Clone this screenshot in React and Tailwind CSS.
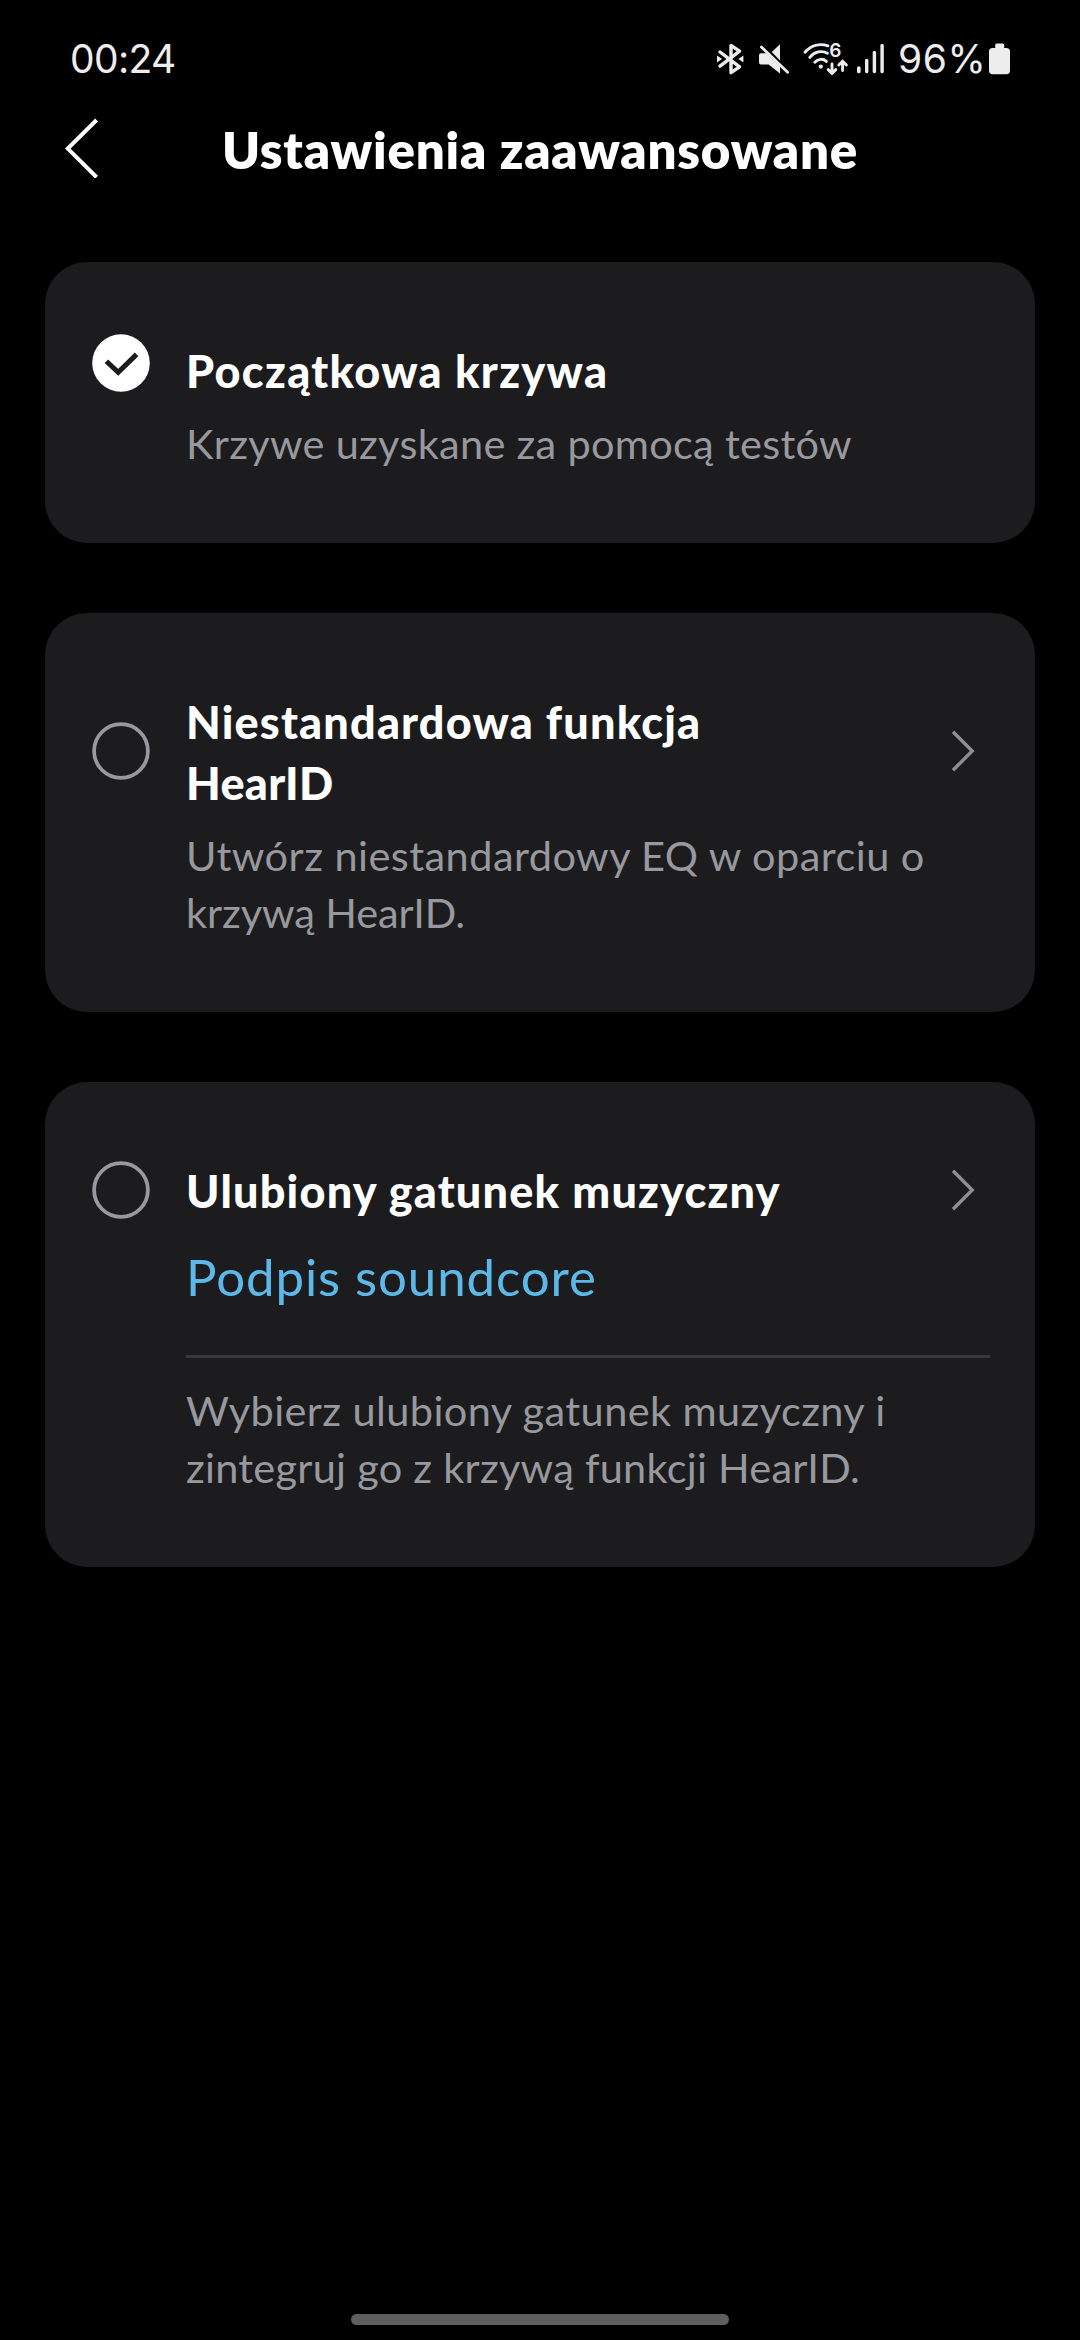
import React, { useState } from 'react';
import clsx from 'clsx';

const StatusBar = () => (
    <div className="flex h-[118px] shrink-0 items-center justify-between pl-[70px] pr-[69px] font-[Inter,sans-serif] text-[39px] leading-[40px] text-[#ededed]">
        <span className="tracking-[-0.65px]">00:24</span>

        <div className="flex items-center">
            {/* Bluetooth */}
            <svg width="28" height="34" viewBox="0 0 28 34" fill="none" stroke="currentColor" strokeWidth="3.4" strokeLinejoin="round" strokeLinecap="round">
                <path d="M4 10 23.6 24.9 15 30.6V3.4L23.6 9.1 4 24.2" />
                <path d="M1 13.4 6 17 1 20.6ZM27.4 13.4 22.4 17l5 3.6Z" fill="currentColor" stroke="none" />
            </svg>
            {/* Muted speaker */}
            <svg className="ml-[14px]" width="32" height="34" viewBox="0 0 32 34" fill="currentColor">
                <path d="M22 2.2V18.6L13.8 9.9ZM3 11.2H8.4L22 24.2V31.6L10.6 22.6H3Q1 22.6 1 20.6V13.2Q1 11.2 3 11.2Z" />
                <path d="M3.4 5 29.6 30.2" fill="none" stroke="currentColor" strokeWidth="2.8" strokeLinecap="round" />
            </svg>
            {/* Wi-Fi 6 */}
            <svg className="ml-[12px] overflow-visible" width="46" height="34" viewBox="0 0 46 34" fill="none" stroke="currentColor" strokeWidth="2.9" strokeLinecap="round">
                <path d="M3 10.2C9.2 3.2 18 1.2 26 3.8" />
                <path d="M7.8 15.4C12.6 9.4 19.6 8.2 25.4 11.2" />
                <path d="M12.8 20.2C16 16.6 21.2 16.4 24.4 19.4" />
                <circle cx="18.8" cy="24.6" r="2.1" fill="currentColor" stroke="none" />
                <path d="M30 22V31.2M26.2 27.6 30 31.4 33.8 27.6" />
                <path d="M40.6 28.6V19.4M36.8 23 40.6 19.2 44.4 23" />
                <text x="27.2" y="15.2" fill="currentColor" stroke="none" className="font-[Inter,sans-serif] text-[19px] font-semibold">6</text>
            </svg>
            {/* Signal */}
            <svg className="ml-[8px]" width="30" height="34" viewBox="0 0 30 34" fill="currentColor">
                <rect x="1" y="24.4" width="3.6" height="6.8" rx="1.4" />
                <rect x="9" y="17" width="3.4" height="14.2" rx="1.4" />
                <rect x="16.7" y="9" width="3.4" height="22.2" rx="1.4" />
                <rect x="24.4" y="2" width="3.4" height="29.2" rx="1.4" />
            </svg>
            <span className="ml-[12px] w-[90px] tracking-[0.6px]">96%</span>
            {/* Battery */}
            <svg width="23" height="34" viewBox="0 0 23 34" fill="currentColor">
                <path d="M7.2 6V3Q7.2 1.4 8.8 1.4H14.6Q16.2 1.4 16.2 3V6H18.4Q22 6 22 9.6V28.6Q22 32.2 18.4 32.2H4.6Q1 32.2 1 28.6V9.6Q1 6 4.6 6Z" />
            </svg>
        </div>
    </div>
);

const Header = () => (
    <header className="relative flex h-[60px] shrink-0 items-center justify-center">
        <button className="absolute left-[62px] top-0 h-[60px]">
            <svg width="40" height="60" viewBox="0 0 40 60" fill="none" stroke="#ffffff" strokeWidth="4">
                <path d="M34.6 2 5.8 30.6 34.6 59.2" />
            </svg>
        </button>
        <h1 className="pt-[4px] text-[51px] leading-[60px] font-extrabold tracking-[0.77px]">Ustawienia zaawansowane</h1>
    </header>
);

const Radio = ({ checked, className }) => (
    <svg className={clsx('shrink-0', className)} width="58" height="58" viewBox="0 0 58 58" fill="none">
        {checked ? (
            <>
                <circle cx="29" cy="29" r="28.8" fill="#ffffff" />
                <path d="M14.4 27.2 26.2 38.4 44.6 20.4" stroke="#1c1c1e" strokeWidth="5" />
            </>
        ) : (
            <circle cx="29" cy="29" r="26.9" stroke="#98989f" strokeWidth="3.8" />
        )}
    </svg>
);

const Chevron = () => (
    <svg className="mr-[15px] shrink-0" width="24" height="42" viewBox="0 0 24 42" fill="none" stroke="#8e8e93" strokeWidth="3.4">
        <path d="M2 1.8 21.2 21 2 40.2" />
    </svg>
);

const Lines = ({ lines }) =>
    lines.map((line) => (
        <span key={line.text} className={clsx('block whitespace-nowrap', line.tracking)}>{line.text}</span>
    ));

const OptionCard = ({ option, checked, onSelect }) => (
    <section onClick={onSelect} className="rounded-[42px] bg-[#1c1c1e] pt-[77px] pr-[45px] pb-[71px] pl-[47px]">
        <div className="flex items-center">
            <Radio checked={checked} className={option.radioClass} />
            <h2 className="-mb-[2px] ml-[36px] flex-1 pt-[2px] text-[45px] leading-[61px] font-black">
                <Lines lines={option.title} />
            </h2>
            {option.hasDetails && <Chevron />}
        </div>

        <div className="ml-[94px]">
            {option.value && (
                <div className="mb-[24px] border-b-[3px] border-[#38383a] pt-[22px] pb-[43px] text-[51px] leading-[70px] tracking-[0.9px] text-[#5bb8e8]">
                    {option.value}
                </div>
            )}
            <p className={clsx('text-[41.5px] leading-[57px] text-[#98989f]', !option.value && 'mt-[15px]')}>
                <Lines lines={option.description} />
            </p>
        </div>
    </section>
);

const OPTIONS = [
    {
        id: 'initial',
        radioClass: '-mt-[13px]',
        title: [{ text: 'Początkowa krzywa', tracking: 'tracking-[1.33px]' }],
        description: [{ text: 'Krzywe uzyskane za pomocą testów', tracking: 'tracking-[0.29px]' }],
    },
    {
        id: 'custom',
        hasDetails: true,
        title: [
            { text: 'Niestandardowa funkcja', tracking: 'tracking-[1.18px]' },
            { text: 'HearID', tracking: 'tracking-[0.3px]' },
        ],
        description: [
            { text: 'Utwórz niestandardowy EQ w oparciu o', tracking: 'tracking-[0.45px]' },
            { text: 'krzywą HearID.', tracking: 'tracking-[-0.1px]' },
        ],
    },
    {
        id: 'genre',
        hasDetails: true,
        title: [{ text: 'Ulubiony gatunek muzyczny', tracking: 'tracking-[1.2px]' }],
        value: 'Podpis soundcore',
        description: [
            { text: 'Wybierz ulubiony gatunek muzyczny i', tracking: 'tracking-[0.4px]' },
            { text: 'zintegruj go z krzywą funkcji HearID.', tracking: 'tracking-[0.25px]' },
        ],
    },
];

const App = () => {
    const [selected, setSelected] = useState('initial');

    return (
        <div className="flex h-[2340px] w-[1080px] flex-col bg-black font-[Lato,sans-serif] text-white">
            <StatusBar />
            <Header />

            <main className="flex flex-col gap-[70px] px-[45px] pt-[84px]">
                {OPTIONS.map((option) => (
                    <OptionCard
                        key={option.id}
                        option={option}
                        checked={selected === option.id}
                        onSelect={() => setSelected(option.id)}
                    />
                ))}
            </main>

            {/* Gesture bar */}
            <div className="mx-auto mt-auto mb-[15px] h-[11px] w-[378px] rounded-full bg-[#5e5e5e]" />
        </div>
    );
};

export default App;
